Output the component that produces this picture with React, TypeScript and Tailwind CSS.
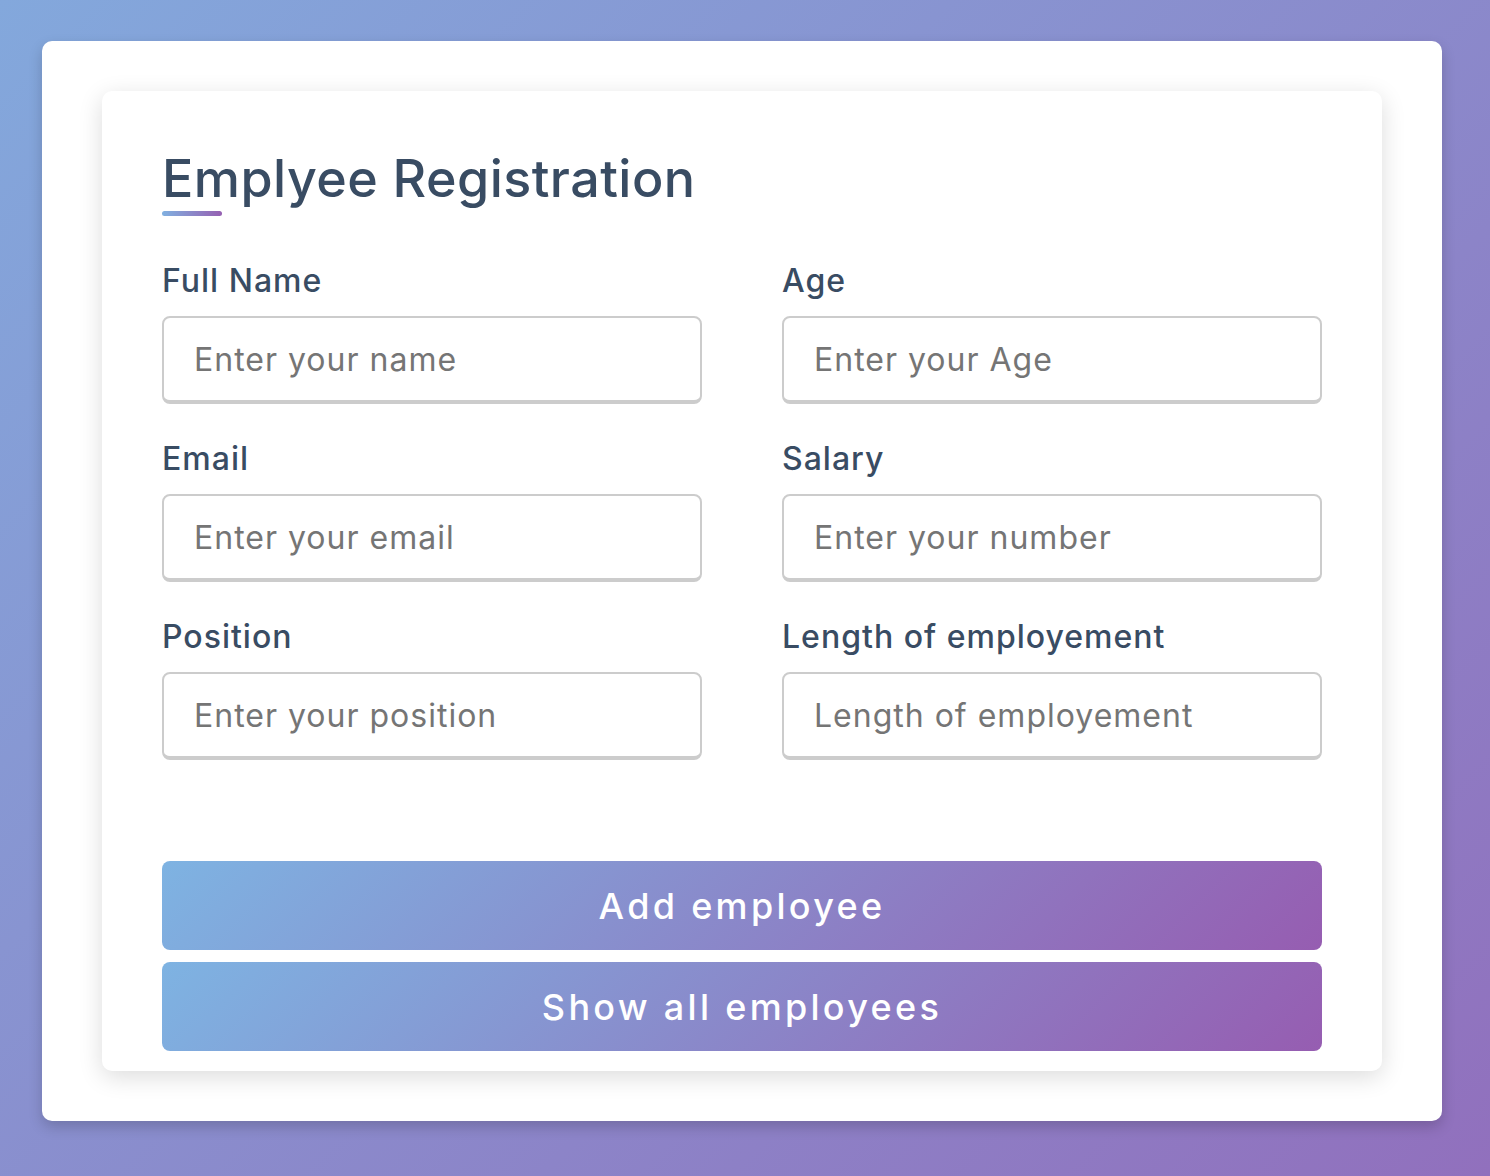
import React from "react";

const fields: [string, string][][] = [
  [
    ["Full Name", "Enter your name"],
    ["Age", "Enter your Age"],
  ],
  [
    ["Email", "Enter your email"],
    ["Salary", "Enter your number"],
  ],
  [
    ["Position", "Enter your position"],
    ["Length of employement", "Length of employement"],
  ],
];

function Field({ label, placeholder }: { label: string; placeholder: string }) {
  return (
    <div className="flex flex-col">
      <label className="text-[32px] leading-[40px] font-medium tracking-[1px] text-[#394c63]">{label}</label>
      <input
        type="text"
        placeholder={placeholder}
        className="mt-[15px] h-[88px] w-full rounded-[8px] border-2 border-b-4 border-[#cccccc] bg-white px-[30px] text-[32px] tracking-[1px] text-[#394c63] placeholder:text-[#757575] outline-none"
      />
    </div>
  );
}

export default function App() {
  return (
    <div
      className="min-h-screen w-full bg-[linear-gradient(135deg,#83a8dc,#9170bd)] pl-[42px] pt-[41px] pb-[55px]"
      style={{ fontFamily: "Inter, 'Open Sans', sans-serif" }}
    >
      <div className="h-[1080px] w-[1400px] rounded-[10px] bg-white px-[60px] pt-[50px] shadow-[0_6px_14px_rgba(0,0,0,0.18)]">
        <div className="rounded-[10px] bg-white px-[60px] pt-[58px] pb-[20px] shadow-[0_6px_24px_rgba(0,0,0,0.14)]">
          <h1 className="text-[52px] leading-[60px] font-medium tracking-[0.45px] text-[#394c63]">Emplyee Registration</h1>
          <div className="mt-[2px] h-[5px] w-[60px] rounded-full bg-[linear-gradient(90deg,#80b0e0,#9660b2)]" />
          <div className="mt-[45px] flex flex-col gap-[35px]">
            {fields.map((row, i) => (
              <div key={i} className="grid grid-cols-2 gap-x-[80px]">
                {row.map(([l, p]) => (
                  <Field key={l} label={l} placeholder={p} />
                ))}
              </div>
            ))}
          </div>
          <div className="mt-[101px] flex flex-col gap-[12px]">
            <button className="h-[89px] w-full rounded-[8px] bg-[linear-gradient(135deg,#7eb3e2,#965db1)] text-[36px] font-medium tracking-[3.3px] text-white">
              Add employee
            </button>
            <button className="h-[89px] w-full rounded-[8px] bg-[linear-gradient(135deg,#7eb3e2,#965db1)] text-[36px] font-medium tracking-[3.3px] text-white">
              Show all employees
            </button>
          </div>
        </div>
      </div>
    </div>
  );
}
